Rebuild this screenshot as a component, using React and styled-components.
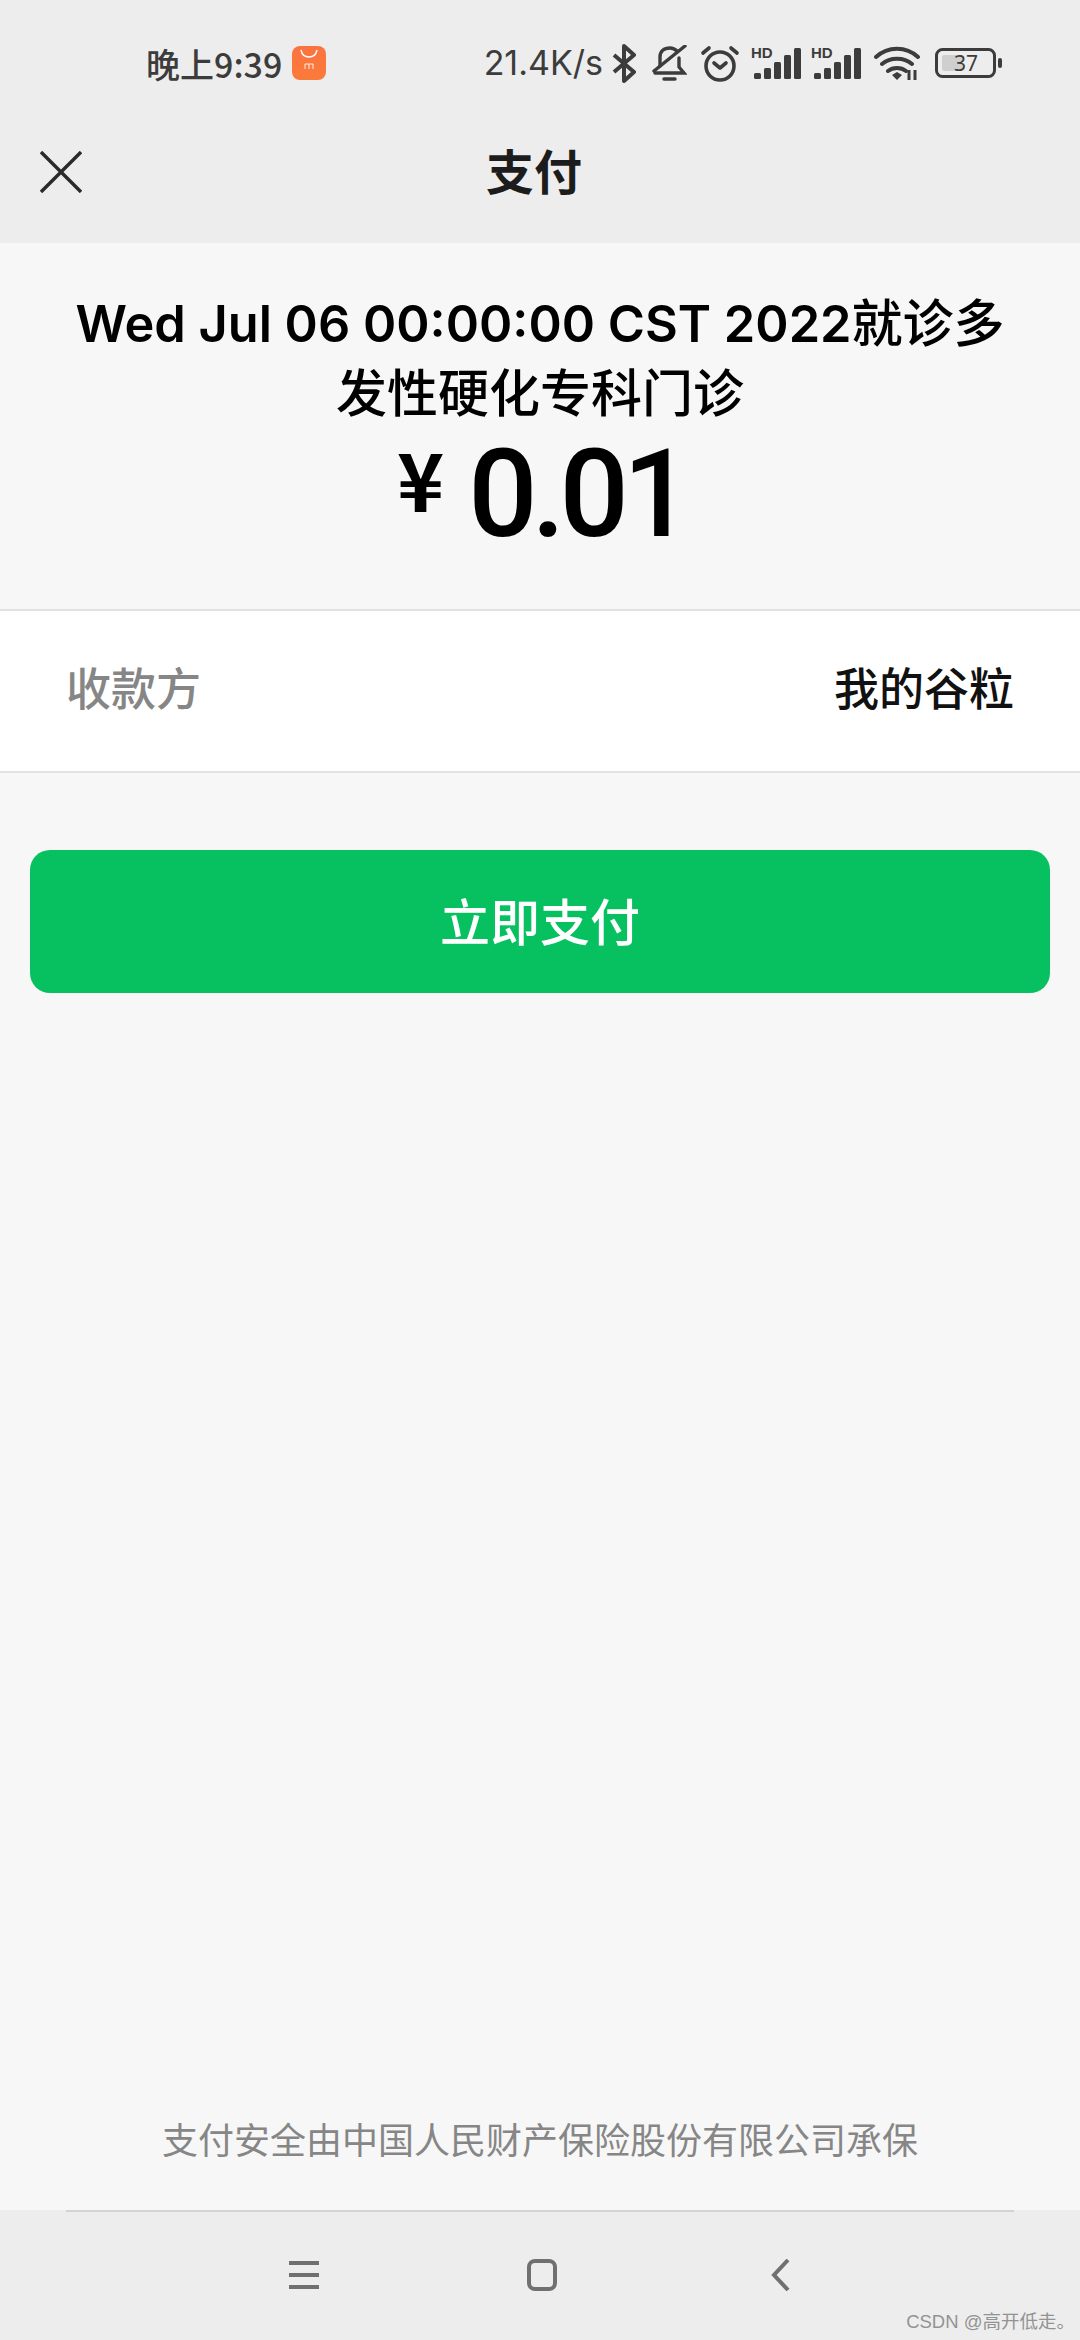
import React from "react"
import styled, { createGlobalStyle } from "styled-components"

const GlobalStyle = createGlobalStyle`
  html, body {
    margin: 0;
    padding: 0;
    background: #f7f7f7;
  }
  * {
    box-sizing: border-box;
  }
  body {
    font-family: "Noto Sans CJK SC", "Noto Sans", sans-serif;
  }
`

const Page = styled.div`
  width: 1080px;
  height: 2340px;
  display: flex;
  flex-direction: column;
  background: #f7f7f7;
  position: relative;
  overflow: hidden;
`
const TopBar = styled.header`
  height: 243px;
  background: #ededed;
  flex-shrink: 0;
`
const StatusBar = styled.div`
  height: 106px;
  padding: 20px 77px 0 146px;
  display: flex;
  align-items: center;
  justify-content: space-between;
  color: #3c3c3c;
`
const Clock = styled.div`
  display: flex;
  align-items: center;
  gap: 10px;
  font-size: 34px;
  font-weight: 500;
`
const StatusIcons = styled.div`
  display: flex;
  align-items: center;
`
const Speed = styled.span`
  font-family: "Inter", "Noto Sans", sans-serif;
  font-size: 34px;
  line-height: 40px;
`
const IconSlot = styled.span`
  display: flex;
  margin-left: ${props => props.$gap}px;
`
const NavBar = styled.div`
  height: 82px;
  margin-top: 25px;
  padding: 0 40px;
  display: grid;
  grid-template-columns: 42px 1fr 42px;
  align-items: center;
`
const CloseButton = styled.div`
  display: flex;
`
const NavTitle = styled.h1`
  margin: 0 12px 6px 0;
  text-align: center;
  font-size: 48px;
  line-height: 60px;
  font-weight: 700;
  color: #1c1c1c;
`
const Summary = styled.section`
  height: 368px;
  padding-top: 44px;
  text-align: center;
  border-bottom: 2px solid #e2e2e2;
`
const OrderTitle = styled.h2`
  margin: 0 auto;
  width: 950px;
  font-size: 51px;
  line-height: 66px;
  font-weight: 500;
  color: #000;
`
const OrderDate = styled.span`
  font-family: "Inter", "Noto Sans", sans-serif;
  font-size: 50.5px;
  font-weight: 600;
`
const Amount = styled.div`
  display: flex;
  justify-content: center;
  align-items: flex-start;
  color: #000;
  padding-left: 3px;
`
const Currency = styled.span`
  font-size: 80px;
  line-height: 108px;
  font-weight: 700;
  margin-right: 24px;
`
const Value = styled.span`
  margin-top: 7px;
  font-family: "Roboto", "Inter", sans-serif;
  font-size: 122px;
  line-height: 130px;
  font-weight: 500;
  letter-spacing: -6px;
`
const PayeeRow = styled.div`
  height: 162px;
  padding: 0 66px 9px;
  display: flex;
  align-items: center;
  justify-content: space-between;
  background: #fff;
  border-bottom: 2px solid #e2e2e2;
  font-size: 45px;
  font-weight: 500;
`
const PayeeLabel = styled.span`
  color: #868686;
`
const PayeeName = styled.span`
  color: #111;
`
const PayButton = styled.button`
  margin: 77px 30px 0;
  height: 143px;
  border: 0;
  border-radius: 20px;
  background: #07c160;
  color: #fff;
  font-family: inherit;
  font-size: 50px;
  font-weight: 500;
  padding: 0 0 6px;
`
const Spacer = styled.div`
  flex: 1;
`
const Insurance = styled.p`
  margin: 0 0 47px;
  text-align: center;
  font-size: 36px;
  line-height: 50px;
  color: #868686;
`
const BottomBar = styled.footer`
  height: 130px;
  background: #ededed;
  position: relative;
  flex-shrink: 0;
  display: grid;
  grid-template-columns: 238px 238px 238px;
  justify-content: center;
  justify-items: center;
  align-items: start;
  padding: 49px 0 0 4px;
  &::before {
    content: "";
    position: absolute;
    top: 0;
    left: 66px;
    right: 66px;
    height: 2px;
    background: #d4d4d4;
  }
`
const Watermark = styled.span`
  position: absolute;
  right: 5px;
  bottom: 4px;
  font-family: "Liberation Sans", "Noto Sans CJK SC", sans-serif;
  font-size: 18.5px;
  line-height: 28px;
  color: #939393;
`

const MiStoreIcon = () => (
  <svg width="34" height="34" viewBox="0 0 34 34">
    <defs>
      <linearGradient id="mi" x1="0" y1="0" x2="0" y2="1">
        <stop offset="0" stopColor="#fb7440" />
        <stop offset="1" stopColor="#fa7a3a" />
      </linearGradient>
    </defs>
    <rect width="34" height="34" rx="8" fill="url(#mi)" />
    <path d="M9 4c1 5 4 7 8 7s7-2 8-7" fill="none" stroke="#fff" strokeWidth="1.4" />
    <path d="M13 23v-5h8v5M17 18v5" fill="none" stroke="#fff" strokeWidth="1" opacity="0.85" />
  </svg>
)
const Bluetooth = () => (
  <svg width="24" height="39" viewBox="0 0 24 39" fill="none" stroke="#3c3c3c" strokeWidth="4">
    <path d="M2 11l20 17-10 9V2l10 9L2 28" strokeLinejoin="round" />
  </svg>
)
const MutedBell = () => (
  <svg width="35" height="37" viewBox="0 0 35 37" fill="none" stroke="#3c3c3c" strokeWidth="3.4" strokeLinecap="round">
    <path d="M8 21V12C8 6 12 3 18 3c3 0 5 1 7 3M27 13v9l5 6H3" />
    <path d="M2 26L33 1" />
    <path d="M12 34h11" />
  </svg>
)
const Alarm = () => (
  <svg width="40" height="37" viewBox="0 0 40 37" fill="none" stroke="#3c3c3c" strokeWidth="3.6" strokeLinecap="round" strokeLinejoin="round">
    <circle cx="20" cy="21" r="14" />
    <path d="M14 18l6 5 6-5M3 8l6-5M37 8l-6-5" />
  </svg>
)
const HdSignal = () => (
  <svg width="50" height="40" viewBox="0 -4 50 40">
    <text x="0" y="11" fontFamily="Liberation Sans, sans-serif" fontWeight="700" fontSize="15" fill="#3c3c3c">HD</text>
    {[[3, 26, 6], [13, 21, 11], [23, 15, 17], [33, 8, 24], [43, 1, 31]].map(([x, y, h]) => (
      <rect key={x} x={x} y={y} width="7" height={h} rx="1.5" fill="#3c3c3c" />
    ))}
  </svg>
)
const Wifi = () => (
  <svg width="46" height="35" viewBox="0 0 46 35" fill="none" stroke="#3c3c3c" strokeWidth="4" strokeLinecap="round">
    <path d="M2 11c12-11 30-11 42 0M8 18c8-7 22-7 30 0M14 25c5-4 13-4 18 0" />
    <path d="M18 29l5 5 5-5-5-3z" fill="#3c3c3c" stroke="none" />
    <path d="M35 24v10M41 24v10" stroke="#3c3c3c" strokeWidth="3" strokeLinecap="butt" />
  </svg>
)
const Battery = () => (
  <svg width="68" height="30" viewBox="0 0 68 30">
    <rect x="1.5" y="1.5" width="58" height="27" rx="6" fill="none" stroke="#3c3c3c" strokeWidth="3" />
    <rect x="7" y="7" width="20" height="16" rx="2" fill="#cfcfcf" />
    <rect x="63" y="10" width="4" height="10" rx="2" fill="#3c3c3c" />
    <text x="31" y="23" textAnchor="middle" fontFamily="Noto Sans, sans-serif" fontSize="21" fill="#3c3c3c">37</text>
  </svg>
)
const CloseIcon = () => (
  <svg width="42" height="42" viewBox="0 0 42 42" fill="none" stroke="#2a2a2a" strokeWidth="3.4">
    <path d="M1 1l40 40M41 1L1 41" />
  </svg>
)
const MenuIcon = () => (
  <svg width="30" height="32" viewBox="0 0 30 32" fill="#707070">
    <rect y="2" width="30" height="4" />
    <rect y="14" width="30" height="4" />
    <rect y="26" width="30" height="4" />
  </svg>
)
const HomeIcon = () => (
  <svg width="30" height="32" viewBox="0 0 30 32" fill="none" stroke="#707070" strokeWidth="4">
    <rect x="2" y="2" width="26" height="28" rx="6" />
  </svg>
)
const BackIcon = () => (
  <svg width="19" height="32" viewBox="0 0 19 32" fill="none" stroke="#707070" strokeWidth="4">
    <path d="M17 1L3 16l14 15" />
  </svg>
)

const statusIcons = [
  { id: "bt", gap: 9, node: <Bluetooth /> },
  { id: "bell", gap: 16, node: <MutedBell /> },
  { id: "alarm", gap: 13, node: <Alarm /> },
  { id: "hd1", gap: 11, node: <HdSignal /> },
  { id: "hd2", gap: 10, node: <HdSignal /> },
  { id: "wifi", gap: 13, node: <Wifi /> },
  { id: "battery", gap: 15, node: <Battery /> },
]

const App = () => (
  <Page>
    <GlobalStyle />
    <TopBar>
      <StatusBar>
        <Clock>
          <span>晚上9:39</span>
          <MiStoreIcon />
        </Clock>
        <StatusIcons>
          <Speed>21.4K/s</Speed>
          {statusIcons.map(({ id, gap, node }) => (
            <IconSlot key={id} $gap={gap}>
              {node}
            </IconSlot>
          ))}
        </StatusIcons>
      </StatusBar>
      <NavBar>
        <CloseButton>
          <CloseIcon />
        </CloseButton>
        <NavTitle>支付</NavTitle>
      </NavBar>
    </TopBar>
    <Summary>
      <OrderTitle>
        <OrderDate>Wed Jul 06 00:00:00 CST 2022</OrderDate>就诊多发性硬化专科门诊
      </OrderTitle>
      <Amount>
        <Currency>¥</Currency>
        <Value>0.01</Value>
      </Amount>
    </Summary>
    <PayeeRow>
      <PayeeLabel>收款方</PayeeLabel>
      <PayeeName>我的谷粒</PayeeName>
    </PayeeRow>
    <PayButton>立即支付</PayButton>
    <Spacer />
    <Insurance>支付安全由中国人民财产保险股份有限公司承保</Insurance>
    <BottomBar>
      <MenuIcon />
      <HomeIcon />
      <BackIcon />
      <Watermark>CSDN @高开低走。</Watermark>
    </BottomBar>
  </Page>
)

export default App
